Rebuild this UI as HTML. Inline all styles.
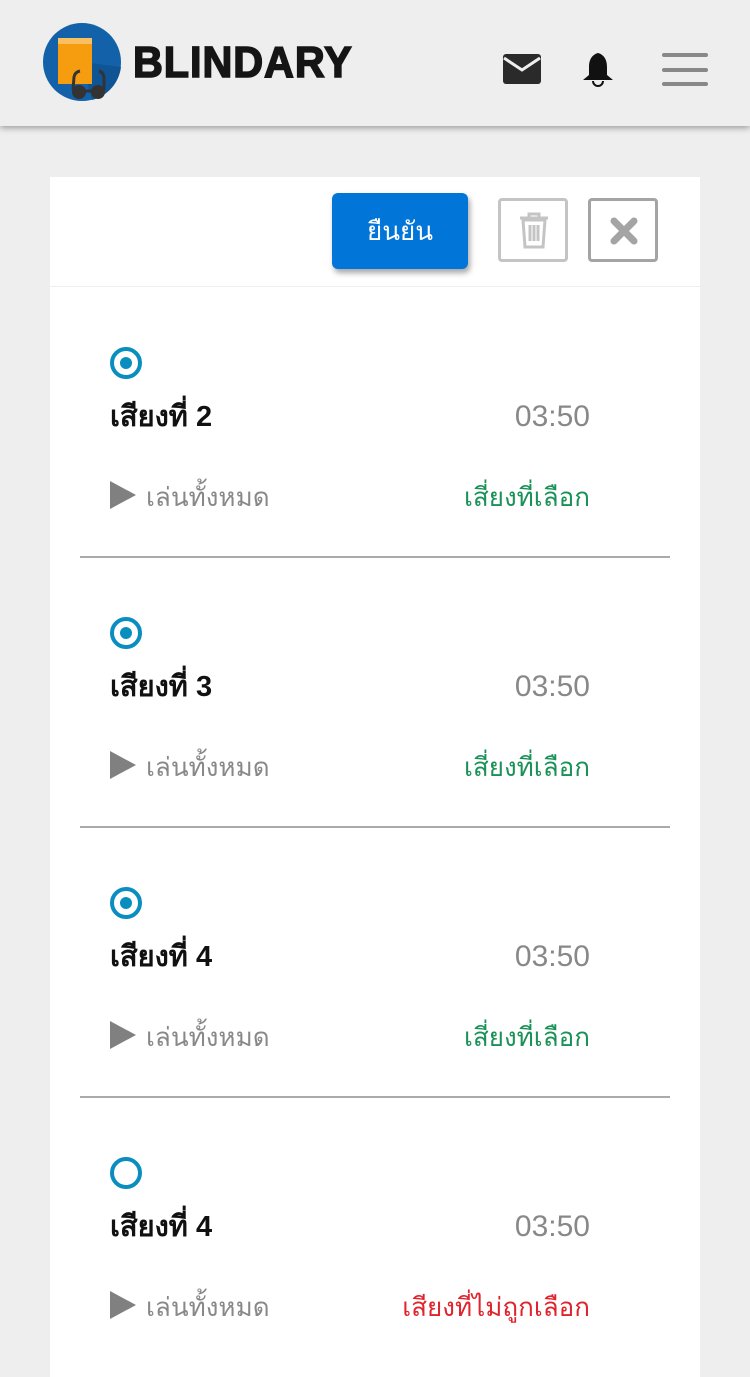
<!DOCTYPE html>
<html><head><meta charset="utf-8"><style>
*{margin:0;padding:0;box-sizing:border-box}
body{width:750px;height:1334px;background:#eeeeee;font-family:"Liberation Sans","DejaVu Sans",sans-serif;position:relative;overflow:hidden}
.hdr{position:absolute;left:0;top:0;width:750px;height:126px;background:#eeeeee;box-shadow:0 2px 6px rgba(0,0,0,.35)}
.card{position:absolute;left:50px;top:177px;width:650px;height:1200px;background:#fff}
.bar{position:absolute;left:0;top:0;width:650px;height:110px;border-bottom:1px solid #eee}
.ok{position:absolute;left:282px;top:16px;width:136px;height:76px;background:#0275d8;border-radius:6px;color:#fff;font-size:26px;line-height:76px;text-align:center;box-shadow:2px 4px 6px rgba(0,0,0,.35)}
.sq{position:absolute;top:21px;width:70px;height:64px;border:3px solid #c4c4c4;border-radius:4px}
.item{position:absolute;left:30px;width:590px;height:270px}
.item .div{position:absolute;left:0;top:269px;width:590px;height:2px;background:#aaa}
.radio{position:absolute;left:30px;top:60px;width:32px;height:32px;border:4px solid #0a8ebf;border-radius:50%}
.radio.on::after{content:"";position:absolute;left:6px;top:6px;width:12px;height:12px;border-radius:50%;background:#0a8ebf}
.title{position:absolute;left:30px;top:110px;font-size:29px;font-weight:bold;color:#111;line-height:40px}
.time{position:absolute;right:80px;top:110px;font-size:30px;color:#888;line-height:40px}
.play{position:absolute;left:30px;top:194px;width:0;height:0;border-left:26px solid #808080;border-top:14px solid transparent;border-bottom:14px solid transparent}
.pt{position:absolute;left:66px;top:190px;font-size:26px;color:#888;line-height:40px}
.st{position:absolute;right:80px;top:190px;font-size:26px;color:#1a9157;line-height:40px}
.st.no{color:#e0242e}
</style></head><body>
<div class="hdr">
<svg style="position:absolute;left:42px;top:22px" width="80" height="80" viewBox="0 0 80 80">
<circle cx="40" cy="40" r="39" fill="#1361a8"/>
<path d="M40 40 L79 45 A39 39 0 0 1 50 78 Z" fill="#0f5494"/>
<rect x="16" y="20" width="34" height="42" fill="#f59d0e"/>
<rect x="16" y="16" width="34" height="6" fill="#f8c060"/>
<circle cx="37" cy="70" r="7" fill="#333"/><circle cx="56" cy="70" r="7" fill="#333"/>
<path d="M31 68 L32 55 Q33 50 38 49 M62 68 L62 55 Q61 50 57 49" stroke="#333" stroke-width="3" fill="none"/>
<path d="M43 69 L50 69" stroke="#333" stroke-width="3"/>
</svg>
<div style="position:absolute;left:133px;top:38px;font-size:44px;font-weight:bold;color:#151515;font-family:'Liberation Sans',sans-serif;-webkit-text-stroke:1.6px #151515;transform:scaleX(0.94);transform-origin:left;letter-spacing:1px">BLINDARY</div>
<svg style="position:absolute;left:503px;top:54px" width="38" height="30" viewBox="0 0 38 30"><rect x="0" y="0" width="38" height="30" rx="3" fill="#2a2a2a"/><path d="M1 4 L19 16 L37 4" stroke="#eee" stroke-width="3" fill="none"/></svg>
<svg style="position:absolute;left:582px;top:51px" width="32" height="36" viewBox="0 0 32 36"><path d="M16 2 C9 4 7 10 7 16 L7 24 L1 29 L31 29 L25 24 L25 16 C25 10 23 4 16 2Z" fill="#111"/><path d="M11 30 A5 5 0 0 0 21 30" stroke="#111" stroke-width="2" fill="none"/></svg>
<div style="position:absolute;left:662px;top:53px;width:46px;height:4px;background:#888;border-radius:2px"></div>
<div style="position:absolute;left:662px;top:68px;width:46px;height:4px;background:#888;border-radius:2px"></div>
<div style="position:absolute;left:662px;top:82px;width:46px;height:4px;background:#888;border-radius:2px"></div>
</div>
<div class="card">
<div class="bar">
<div class="ok">ยืนยัน</div>
<div class="sq" style="left:448px"><svg style="position:absolute;left:17px;top:10px" width="32" height="38" viewBox="0 0 32 38"><path d="M2 7 H30 M11 7 V3 H21 V7" stroke="#c4c4c4" stroke-width="3" fill="none"/><path d="M5 9 H27 L25 36 H7Z" stroke="#c4c4c4" stroke-width="3" fill="none"/><path d="M12 14 V30 M16 14 V30 M20 14 V30" stroke="#c4c4c4" stroke-width="3"/></svg></div>
<div class="sq" style="left:538px;border-color:#a4a4a4"><svg style="position:absolute;left:19px;top:16px" width="28" height="28" viewBox="0 0 28 28"><path d="M4 4 L24 24 M24 4 L4 24" stroke="#a4a4a4" stroke-width="7" stroke-linecap="round"/></svg></div>
</div>
<div class="item" style="top:110px"><div class="radio on"></div><div class="title">เสียงที่ 2</div><div class="time">03:50</div><div class="play"></div><div class="pt">เล่นทั้งหมด</div><div class="st">เสี่ยงที่เลือก</div><div class="div"></div></div>
<div class="item" style="top:380px"><div class="radio on"></div><div class="title">เสียงที่ 3</div><div class="time">03:50</div><div class="play"></div><div class="pt">เล่นทั้งหมด</div><div class="st">เสี่ยงที่เลือก</div><div class="div"></div></div>
<div class="item" style="top:650px"><div class="radio on"></div><div class="title">เสียงที่ 4</div><div class="time">03:50</div><div class="play"></div><div class="pt">เล่นทั้งหมด</div><div class="st">เสี่ยงที่เลือก</div><div class="div"></div></div>
<div class="item" style="top:920px"><div class="radio"></div><div class="title">เสียงที่ 4</div><div class="time">03:50</div><div class="play"></div><div class="pt">เล่นทั้งหมด</div><div class="st no">เสียงที่ไม่ถูกเลือก</div></div>
</div>
</body></html>
